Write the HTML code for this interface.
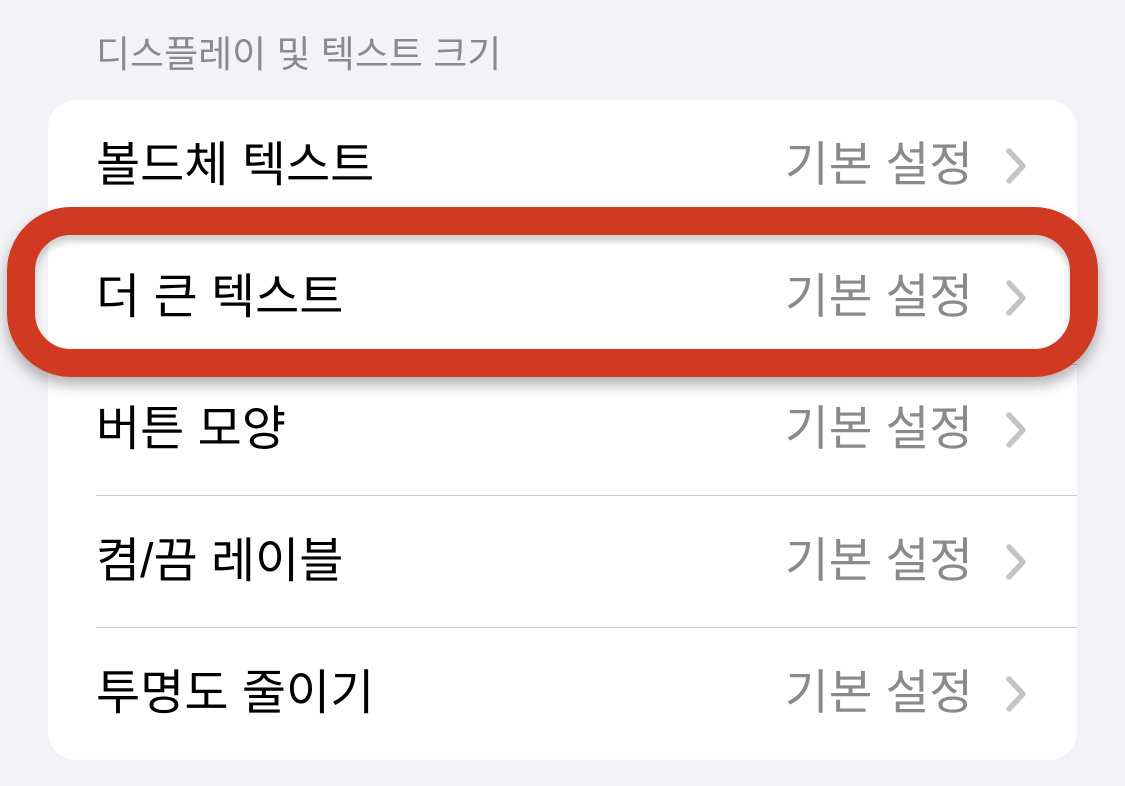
<!DOCTYPE html>
<html><head><meta charset="utf-8"><style>
body{margin:0;width:1125px;height:786px;background:#f2f2f7;position:relative;overflow:hidden;font-family:"Liberation Sans","Noto Sans CJK KR",sans-serif;}
.hdr{position:absolute;left:96px;top:30px;font-size:37px;line-height:50px;color:#8a8a8e;white-space:nowrap;}
.card{position:absolute;left:48px;top:100px;width:1029px;height:660px;background:#fff;border-radius:28px;}
.row{position:absolute;left:0;width:1029px;height:132px;}
.t{position:absolute;left:48px;top:0;line-height:132px;font-size:48px;color:#000;white-space:nowrap;}
.v{position:absolute;right:104px;top:0;line-height:132px;font-size:47.5px;color:#8a8a8e;white-space:nowrap;}
.c{position:absolute;left:955px;top:48px;}
.sep{position:absolute;left:48px;right:0;height:1px;background:#c8c8cc;}
.ring{position:absolute;left:7px;top:207px;width:1091px;height:170px;box-sizing:border-box;border:28px solid #d03a22;border-radius:64px;box-shadow:0 8px 14px rgba(0,0,0,0.3), inset 0 6px 8px rgba(0,0,0,0.2);}
</style></head><body>
<div class="hdr">디스플레이 및 텍스트 크기</div>
<div class="card">
  <div class="row" style="top:0"><div class="t">볼드체 텍스트</div><div class="v">기본 설정</div><svg class="c" width="30" height="36" viewBox="0 0 30 36"><path d="M6 3 L20 18 L6 33" fill="none" stroke="#c4c4c7" stroke-width="5.5" stroke-linecap="round" stroke-linejoin="round"/></svg></div>
  <div class="sep" style="top:132px"></div>
  <div class="row" style="top:132px"><div class="t">더 큰 텍스트</div><div class="v">기본 설정</div><svg class="c" width="30" height="36" viewBox="0 0 30 36"><path d="M6 3 L20 18 L6 33" fill="none" stroke="#c4c4c7" stroke-width="5.5" stroke-linecap="round" stroke-linejoin="round"/></svg></div>
  <div class="sep" style="top:264px"></div>
  <div class="row" style="top:264px"><div class="t">버튼 모양</div><div class="v">기본 설정</div><svg class="c" width="30" height="36" viewBox="0 0 30 36"><path d="M6 3 L20 18 L6 33" fill="none" stroke="#c4c4c7" stroke-width="5.5" stroke-linecap="round" stroke-linejoin="round"/></svg></div>
  <div class="sep" style="top:395px"></div>
  <div class="row" style="top:396px"><div class="t">켬/끔 레이블</div><div class="v">기본 설정</div><svg class="c" width="30" height="36" viewBox="0 0 30 36"><path d="M6 3 L20 18 L6 33" fill="none" stroke="#c4c4c7" stroke-width="5.5" stroke-linecap="round" stroke-linejoin="round"/></svg></div>
  <div class="sep" style="top:527px"></div>
  <div class="row" style="top:528px"><div class="t">투명도 줄이기</div><div class="v">기본 설정</div><svg class="c" width="30" height="36" viewBox="0 0 30 36"><path d="M6 3 L20 18 L6 33" fill="none" stroke="#c4c4c7" stroke-width="5.5" stroke-linecap="round" stroke-linejoin="round"/></svg></div>
</div>
<div class="ring"></div>
</body></html>
